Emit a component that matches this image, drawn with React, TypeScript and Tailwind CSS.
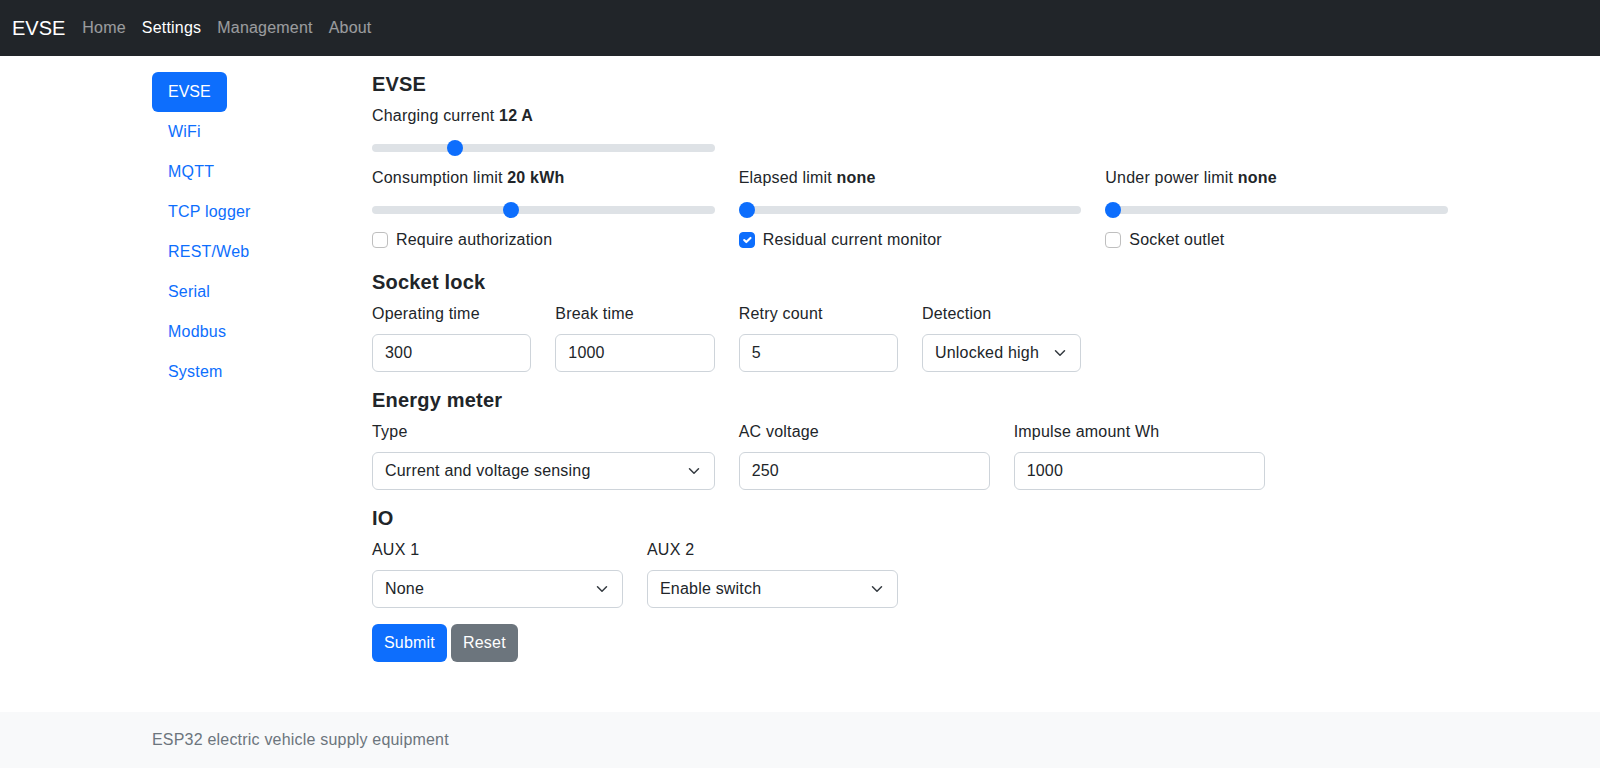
import React from 'react';

// Bootstrap-like settings page for the EVSE web UI

const sideItems = ['EVSE', 'WiFi', 'MQTT', 'TCP logger', 'REST/Web', 'Serial', 'Modbus', 'System'];

const Chevron = () => (
  <svg viewBox="0 0 16 16" className="w-4 h-3 shrink-0" fill="none">
    <path d="m2 5 6 6 6-6" stroke="#343a40" strokeWidth="2" strokeLinecap="round" strokeLinejoin="round" />
  </svg>
);

const Range = ({ value, min, max }: { value: number; min: number; max: number }) => {
  const f = (value - min) / (max - min);
  return (
    <div className="relative h-6 mb-[6px]">
      <div className="absolute inset-x-0 top-2 h-2 rounded-full bg-[#dee2e6]" />
      <div
        className="absolute top-1 w-4 h-4 rounded-full bg-[#0d6efd]"
        style={{ left: `calc(${f} * (100% - 16px))` }}
      />
    </div>
  );
};

const Check = ({ label, checked }: { label: string; checked?: boolean }) => (
  <div className="flex h-6 mb-[2px]">
    {checked ? (
      <span className="mt-1 w-4 h-4 rounded-[4px] bg-[#0d6efd] border border-[#0d6efd] flex items-center justify-center">
        <svg viewBox="0 0 20 20" className="w-4 h-4" fill="none">
          <path d="m6 10 3 3 6-6" stroke="#fff" strokeWidth="3" strokeLinecap="round" strokeLinejoin="round" />
        </svg>
      </span>
    ) : (
      <span className="mt-1 w-4 h-4 rounded-[4px] border border-[#bfbfbf] bg-white" />
    )}
    <span className="ml-2">{label}</span>
  </div>
);

const Field = ({ label, value, select }: { label: string; value: string; select?: boolean }) => (
  <div>
    <div className="h-6 mb-2">{label}</div>
    <div className="h-[38px] border border-[#ced4da] rounded-md px-3 flex items-center justify-between bg-white">
      <span>{value}</span>
      {select && <Chevron />}
    </div>
  </div>
);

const Heading = ({ children }: { children: React.ReactNode }) => (
  <h5 className="text-xl leading-6 font-semibold mb-2">{children}</h5>
);

export default function App() {
  return (
    <div className="min-h-screen flex flex-col bg-white text-[#212529] text-base leading-6 tracking-[0.2px] font-['Liberation_Sans',Arial,sans-serif]">
      {/* Navbar */}
      <nav className="bg-[#212529] h-14 px-3 flex items-center">
        <span className="text-xl leading-[30px] text-white mr-[9px] tracking-normal">EVSE</span>
        <ul className="flex">
          <li className="px-2 py-2 text-white/55">Home</li>
          <li className="px-2 py-2 text-white">Settings</li>
          <li className="px-2 py-2 text-white/55">Management</li>
          <li className="px-2 py-2 text-white/55">About</li>
        </ul>
      </nav>

      <div className="w-[1320px] mx-auto px-3 mt-4">
        <div className="flex -mx-3">
          {/* Side pills */}
          <div className="w-[220px] px-3">
            <ul className="flex flex-col items-start">
              {sideItems.map((s, i) => (
                <li
                  key={s}
                  className={
                    i === 0
                      ? 'px-4 py-2 rounded-md bg-[#0d6efd] text-white tracking-normal'
                      : 'px-4 py-2 text-[#0d6efd]'
                  }
                >
                  {s}
                </li>
              ))}
            </ul>
          </div>

          {/* Form */}
          <div className="w-[1100px] px-3">
            <div className="mb-4">
              <Heading>EVSE</Heading>
              <div className="grid grid-cols-3 gap-x-6">
                <div>
                  <div className="h-6 mb-2">
                    Charging current <b>12 A</b>
                  </div>
                  <Range value={12} min={6} max={32} />
                </div>
              </div>
              <div className="grid grid-cols-3 gap-x-6">
                <div>
                  <div className="h-6 mb-2">
                    Consumption limit <b>20 kWh</b>
                  </div>
                  <Range value={20} min={0} max={50} />
                  <Check label="Require authorization" />
                </div>
                <div>
                  <div className="h-6 mb-2">
                    Elapsed limit <b>none</b>
                  </div>
                  <Range value={0} min={0} max={50} />
                  <Check label="Residual current monitor" checked />
                </div>
                <div>
                  <div className="h-6 mb-2">
                    Under power limit <b>none</b>
                  </div>
                  <Range value={0} min={0} max={50} />
                  <Check label="Socket outlet" />
                </div>
              </div>
            </div>

            <div className="mb-4">
              <Heading>Socket lock</Heading>
              <div className="grid grid-cols-6 gap-x-6">
                <Field label="Operating time" value="300" />
                <Field label="Break time" value="1000" />
                <Field label="Retry count" value="5" />
                <Field label="Detection" value="Unlocked high" select />
              </div>
            </div>

            <div className="mb-4">
              <Heading>Energy meter</Heading>
              <div className="grid grid-cols-12 gap-x-6">
                <div className="col-span-4">
                  <Field label="Type" value="Current and voltage sensing" select />
                </div>
                <div className="col-span-3">
                  <Field label="AC voltage" value="250" />
                </div>
                <div className="col-span-3">
                  <Field label="Impulse amount Wh" value="1000" />
                </div>
              </div>
            </div>

            <div className="mb-4">
              <Heading>IO</Heading>
              <div className="grid grid-cols-12 gap-x-6">
                <div className="col-span-3">
                  <Field label="AUX 1" value="None" select />
                </div>
                <div className="col-span-3">
                  <Field label="AUX 2" value="Enable switch" select />
                </div>
              </div>
            </div>

            <div className="flex gap-1 mb-12">
              <button className="h-[38px] px-3 rounded-md bg-[#0d6efd] text-white">Submit</button>
              <button className="h-[38px] px-3 rounded-md bg-[#6c757d] text-white">Reset</button>
            </div>
          </div>
        </div>
      </div>

      <footer className="mt-auto bg-[#f8f9fa] py-4">
        <div className="w-[1320px] mx-auto px-3 text-[#6c757d]">ESP32 electric vehicle supply equipment</div>
      </footer>
    </div>
  );
}
